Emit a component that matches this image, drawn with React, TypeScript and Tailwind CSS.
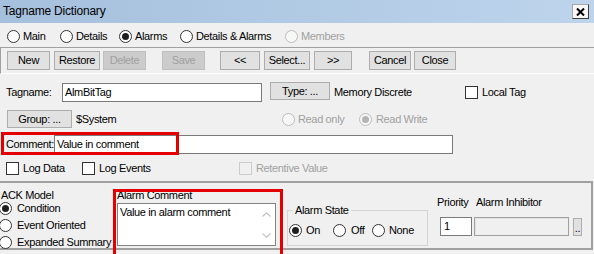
import React from "react";

type RadioProps = {
  label: string;
  checked?: boolean;
  disabled?: boolean;
  className?: string;
  gapClass?: string;
};

const Radio = ({ label, checked, disabled, className = "", gapClass = "ml-[3px]" }: RadioProps) => (
  <div className={`flex items-center ${className}`}>
    <span
      className={`flex h-[13px] w-[13px] shrink-0 items-center justify-center rounded-full border ${
        disabled ? "border-[#bcbcbc] bg-[#f7f7f7]" : "border-[#333333] bg-white"
      }`}
    >
      {checked && (
        <span className={`h-[7px] w-[7px] rounded-full ${disabled ? "bg-[#b4b4b4]" : "bg-[#1e1e1e]"}`} />
      )}
    </span>
    <span className={`${gapClass} whitespace-nowrap ${disabled ? "text-[#a0a0a0]" : "text-black"}`}>{label}</span>
  </div>
);

type CheckProps = { label: string; disabled?: boolean; className?: string };

const Check = ({ label, disabled, className = "" }: CheckProps) => (
  <div className={`flex items-center ${className}`}>
    <span
      className={`h-[13px] w-[13px] shrink-0 border ${
        disabled ? "border-[#cccccc] bg-[#f0f0f0]" : "border-[#333333] bg-white"
      }`}
    />
    <span className={`ml-[4px] whitespace-nowrap ${disabled ? "text-[#a0a0a0]" : "text-black"}`}>{label}</span>
  </div>
);

type BtnProps = { label: string; disabled?: boolean; className?: string };

const Btn = ({ label, disabled, className = "" }: BtnProps) => (
  <button
    type="button"
    className={`flex shrink-0 items-center justify-center whitespace-nowrap border ${
      disabled ? "border-[#bfbfbf] bg-[#cccccc] text-[#a0a0a0]" : "border-[#adadad] bg-[#e1e1e1] text-black"
    } ${className}`}
  >
    {label}
  </button>
);

const Chevron = ({ up }: { up?: boolean }) => (
  <svg width="9" height="5" viewBox="0 0 9 5">
    <path
      d={up ? "M0.5 4.5 L4.5 0.8 L8.5 4.5" : "M0.5 0.5 L4.5 4.2 L8.5 0.5"}
      fill="none"
      stroke="#c4c4c4"
      strokeWidth="1.2"
    />
  </svg>
);

export default function App() {
  return (
    <div className="relative h-[254px] w-[594px] overflow-hidden bg-[#f0f0f0] font-['Liberation_Sans',Arial,sans-serif] text-[11px] leading-[13px] tracking-[-0.35px] text-black">
      {/* title bar */}
      <div className="flex h-[23px] items-center bg-linear-to-r from-[#a5c0dd] to-[#bdd4ec] pl-[3px] pr-[5px]">
        <span className="text-[12px] tracking-[-0.2px]">Tagname Dictionary</span>
        <button
          type="button"
          className="ml-auto flex h-[15px] w-[17px] items-center justify-center border border-[#a8a8a8] border-b-[#3c3c3c] border-r-[#3c3c3c] bg-[#f7f7f7]"
        >
          <svg width="9" height="8" viewBox="0 0 9 8">
            <path d="M1 0.5 L8 7.5 M8 0.5 L1 7.5" stroke="#000" strokeWidth="2" />
          </svg>
        </button>
      </div>

      {/* view tabs */}
      <div className="flex h-[24px] items-center pl-[7px] pt-[3px]">
        <Radio label="Main" className="w-[53px]" />
        <Radio label="Details" className="w-[59px]" />
        <Radio label="Alarms" checked className="w-[61px]" />
        <Radio label="Details & Alarms" className="w-[105px]" />
        <Radio label="Members" disabled />
      </div>

      {/* toolbar */}
      <div className="flex h-[27px] items-start border-b border-l border-t border-b-white border-l-[#a0a0a0] border-t-[#a0a0a0] pl-[6px] pt-[3px]">
        <Btn label="New" className="h-[19px] w-[43px]" />
        <Btn label="Restore" className="ml-[4px] h-[19px] w-[46px]" />
        <Btn label="Delete" disabled className="ml-[3px] h-[19px] w-[43px]" />
        <Btn label="Save" disabled className="ml-[16px] h-[19px] w-[43px]" />
        <Btn label="<<" className="ml-[15px] h-[19px] w-[40px]" />
        <Btn label="Select..." className="ml-[4px] h-[19px] w-[46px]" />
        <Btn label=">>" className="ml-[4px] h-[19px] w-[38px]" />
        <Btn label="Cancel" className="ml-[17px] h-[19px] w-[42px]" />
        <Btn label="Close" className="ml-[3px] h-[19px] w-[42px]" />
      </div>

      {/* tag fields */}
      <div className="mt-[8px] flex h-[21px] items-center pl-[6px]">
        <span className="w-[56px]">Tagname:</span>
        <div className="h-[19px] w-[200px] border border-[#7a7a7a] bg-white pl-[2px] leading-[17px]">AlmBitTag</div>
        <Btn label="Type: ..." className="ml-[8px] h-[18px] w-[60px] self-start" />
        <span className="ml-[4px] w-[131px]">Memory Discrete</span>
        <Check label="Local Tag" />
      </div>

      <div className="mt-[7px] flex h-[18px] items-center pl-[7px]">
        <Btn label="Group: ..." className="h-[18px] w-[65px]" />
        <span className="ml-[4px] w-[206px]">$System</span>
        <Radio label="Read only" disabled className="w-[77px]" />
        <Radio label="Read Write" disabled checked gapClass="ml-[4px]" />
      </div>

      <div className="mt-[7px] flex h-[19px] items-center pl-[6px]">
        <span className="w-[48px] whitespace-nowrap">Comment:</span>
        <div className="h-[19px] w-[399px] border border-[#7a7a7a] bg-white pl-[2px] leading-[17px]">Value in comment</div>
      </div>

      <div className="mt-[8px] flex h-[13px] items-center pl-[6px]">
        <Check label="Log Data" className="w-[76px]" />
        <Check label="Log Events" className="w-[157px]" />
        <Check label="Retentive Value" disabled />
      </div>

      {/* alarm panel */}
      <div className="mt-[6px] flex h-[69px] w-[593px] items-start border-b-2 border-r-2 border-t-2 border-[#a0a0a0]">
        <div className="w-[117px] pt-[6px]">
          <div className="h-[13px] pl-[1px]">ACK Model</div>
          <Radio label="Condition" checked className="-ml-[1px] h-[13px]" gapClass="ml-[5px]" />
          <Radio label="Event Oriented" className="-ml-[1px] mt-[4px] h-[13px]" gapClass="ml-[5px]" />
          <Radio label="Expanded Summary" className="-ml-[1px] mt-[4px] h-[13px]" gapClass="ml-[5px]" />
        </div>

        <div className="w-[159px] pt-[6px]">
          <div className="h-[13px]">Alarm Comment</div>
          <div className="mt-[1px] flex h-[43px] border border-[#828282] bg-white">
            <div className="flex-1 pl-[2px] pt-[2px]">Value in alarm comment</div>
            <div className="flex w-[17px] flex-col items-center justify-between pb-[7px] pt-[8px]">
              <Chevron up />
              <Chevron />
            </div>
          </div>
        </div>

        <fieldset className="ml-[11px] mt-[21px] h-[42px] w-[141px] border border-[#d5d5d5] pl-[1px]">
          <legend className="ml-[4px] px-[2px] leading-[13px]">Alarm State</legend>
          <div className="mt-[7px] flex items-center">
            <Radio label="On" checked className="w-[44px]" gapClass="ml-[4px]" />
            <Radio label="Off" className="w-[39px]" gapClass="ml-[5px]" />
            <Radio label="None" gapClass="ml-[4px]" />
          </div>
        </fieldset>

        <div className="ml-[9px] pt-[13px]">
          <div className="flex h-[13px]">
            <span className="w-[39px]">Priority</span>
            <span>Alarm Inhibitor</span>
          </div>
          <div className="mt-[8px] flex items-start pl-[3px]">
            <div className="h-[19px] w-[32px] border border-[#7a7a7a] bg-white pl-[3px] leading-[17px]">1</div>
            <div className="ml-[2px] h-[19px] w-[95px] border border-[#a0a0a0] bg-[#f0f0f0] shadow-[inset_1px_1px_0_#e3e3e3]" />
            <button
              type="button"
              className="ml-[4px] mt-[1px] flex h-[18px] w-[9px] items-end justify-center border border-[#adadad] bg-[#e1e1e1] pb-[3px] leading-[8px]"
            >
              ..
            </button>
          </div>
        </div>
      </div>

      {/* annotation boxes */}
      <div className="pointer-events-none absolute left-[1px] top-[132px] h-[23px] w-[178px] border-[3px] border-[#e50000]" />
      <div className="pointer-events-none absolute left-[113px] top-[189px] h-[70px] w-[170px] border-[3px] border-[#e50000]" />
    </div>
  );
}
